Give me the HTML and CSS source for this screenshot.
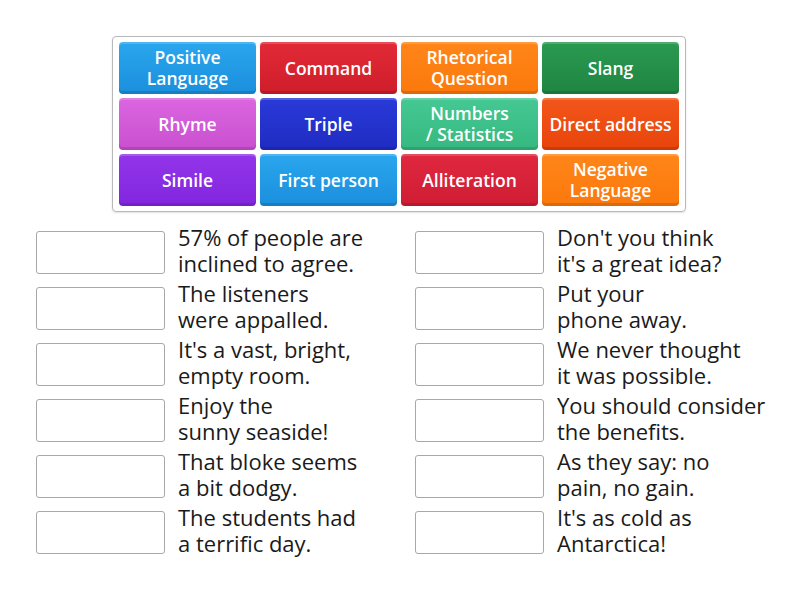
FILE: index.html
```html
<!DOCTYPE html>
<html>
<head>
<meta charset="utf-8">
<link rel="stylesheet" href="styles.css">
</head>
<body>
<div class="bank">
  <div class="tile c-blue">Positive<br>Language</div>
  <div class="tile c-red">Command</div>
  <div class="tile c-orange">Rhetorical<br>Question</div>
  <div class="tile c-green">Slang</div>
  <div class="tile c-pink">Rhyme</div>
  <div class="tile c-navy">Triple</div>
  <div class="tile c-sea">Numbers<br>/ Statistics</div>
  <div class="tile c-redorange">Direct address</div>
  <div class="tile c-purple">Simile</div>
  <div class="tile c-blue">First person</div>
  <div class="tile c-crimson">Alliteration</div>
  <div class="tile c-orange">Negative<br>Language</div>
</div>
<div class="targets">
  <div class="col">
    <div class="item"><div class="slot"></div><div class="txt">57% of people are<br>inclined to agree.</div></div>
    <div class="item"><div class="slot"></div><div class="txt">The listeners<br>were appalled.</div></div>
    <div class="item"><div class="slot"></div><div class="txt">It's a vast, bright,<br>empty room.</div></div>
    <div class="item"><div class="slot"></div><div class="txt">Enjoy the<br>sunny seaside!</div></div>
    <div class="item"><div class="slot"></div><div class="txt">That bloke seems<br>a bit dodgy.</div></div>
    <div class="item"><div class="slot"></div><div class="txt">The students had<br>a terrific day.</div></div>
  </div>
  <div class="col">
    <div class="item"><div class="slot"></div><div class="txt">Don't you think<br>it's a great idea?</div></div>
    <div class="item"><div class="slot"></div><div class="txt">Put your<br>phone away.</div></div>
    <div class="item"><div class="slot"></div><div class="txt">We never thought<br>it was possible.</div></div>
    <div class="item"><div class="slot"></div><div class="txt">You should consider<br>the benefits.</div></div>
    <div class="item"><div class="slot"></div><div class="txt">As they say: no<br>pain, no gain.</div></div>
    <div class="item"><div class="slot"></div><div class="txt">It's as cold as<br>Antarctica!</div></div>
  </div>
</div>
</body>
</html>
```

FILE: styles.css
```css
html, body {
  margin: 0;
  padding: 0;
  background: #ffffff;
  font-family: "Open Sans", "Noto Sans", sans-serif;
}
.bank {
  margin: 36px 0 0 112px;
  width: 560px;
  padding: 5px 6px 5px 6px;
  border: 1px solid #b8b8b8;
  border-radius: 4px;
  box-shadow: 0 1px 2px rgba(0,0,0,0.12);
  display: grid;
  grid-template-columns: repeat(4, 137px);
  grid-auto-rows: 52px;
  gap: 4px;
}
.tile {
  border-radius: 4px;
  color: #fff;
  font-weight: 600;
  font-size: 17.5px;
  line-height: 21px;
  display: flex;
  align-items: center;
  justify-content: center;
  text-align: center;
  box-shadow: inset 0 2px 0 rgba(255,255,255,0.18), inset 0 -3px 0 rgba(0,0,0,0.12);
}
.c-blue { background: linear-gradient(#2aa6ee, #1b8fdc); }
.c-red { background: linear-gradient(#e22a37, #cf1d2b); }
.c-orange { background: linear-gradient(#ff8619, #fb780c); }
.c-green { background: linear-gradient(#2a9a50, #1f8542); }
.c-pink { background: linear-gradient(#db66e0, #c94fcf); }
.c-navy { background: linear-gradient(#2a3ad8, #1f2cc2); }
.c-sea { background: linear-gradient(#45c893, #36b880); }
.c-redorange { background: linear-gradient(#f2561a, #e8440b); }
.c-purple { background: linear-gradient(#9235ea, #8226de); }
.c-crimson { background: linear-gradient(#e0283f, #cf1d34); }
.targets {
  display: flex;
  margin: 14px 0 0 36px;
}
.col {
  display: flex;
  flex-direction: column;
  gap: 4px;
  width: 379px;
  flex: none;
}
.item {
  display: flex;
  align-items: flex-start;
  gap: 13px;
  height: 52px;
}
.slot {
  flex: none;
  width: 127px;
  height: 41px;
  margin-top: 5px;
  border: 1px solid #a8a8a8;
  border-radius: 3px;
  background: #fff;
}
.txt {
  white-space: nowrap;
  font-size: 22px;
  line-height: 26px;
  margin-top: -2px;
  color: #1a1a1a;
}
```
